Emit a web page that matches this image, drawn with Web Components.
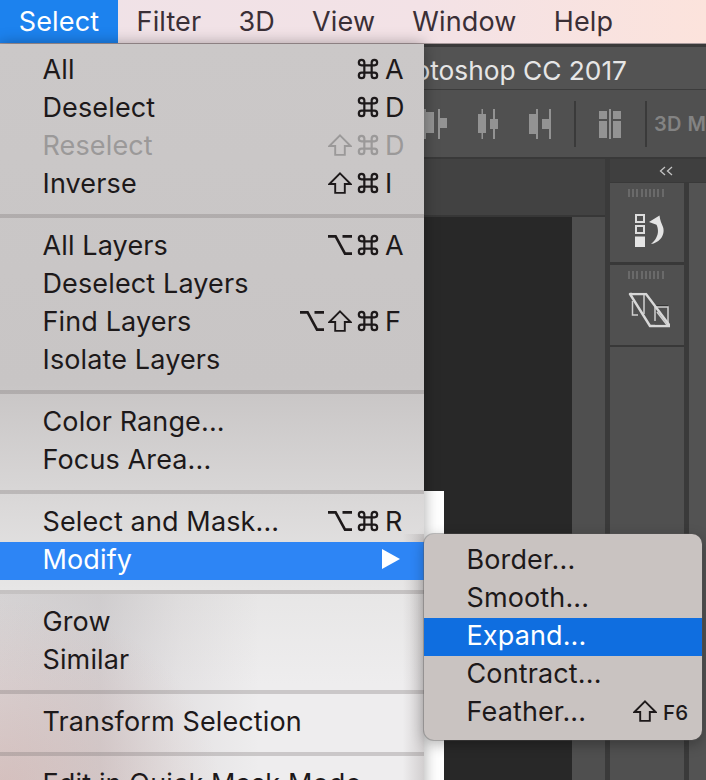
<!DOCTYPE html>
<html lang="en"><head><meta charset="utf-8"><title>Select menu</title>
<style>
html,body{margin:0;padding:0;background:#4a4a4a}
body{font-family:Inter,"Liberation Sans",sans-serif;font-size:27px;letter-spacing:.13px;width:706px;height:780px;overflow:hidden}
</style></head><body>
<app-stage>
  <mac-menubar>
    <bar-item active>Select</bar-item><bar-item>Filter</bar-item><bar-item>3D</bar-item><bar-item>View</bar-item><bar-item>Window</bar-item><bar-item>Help</bar-item>
  </mac-menubar>
  <ps-window>otoshop CC 2017</ps-window>
  <select-menu slot="over">
    <menu-row keys="cmd" letter="A">All</menu-row>
    <menu-row keys="cmd" letter="D">Deselect</menu-row>
    <menu-row keys="shift cmd" letter="D" disabled>Reselect</menu-row>
    <menu-row keys="shift cmd" letter="I">Inverse</menu-row>
    <menu-sep></menu-sep>
    <menu-row keys="opt cmd" letter="A">All Layers</menu-row>
    <menu-row>Deselect Layers</menu-row>
    <menu-row keys="opt shift cmd" letter="F">Find Layers</menu-row>
    <menu-row>Isolate Layers</menu-row>
    <menu-sep></menu-sep>
    <menu-row>Color Range...</menu-row>
    <menu-row>Focus Area...</menu-row>
    <menu-sep></menu-sep>
    <menu-row keys="opt cmd" letter="R">Select and Mask...</menu-row>
    <menu-row selected arrow>Modify</menu-row>
    <menu-sep></menu-sep>
    <menu-row>Grow</menu-row>
    <menu-row>Similar</menu-row>
    <menu-sep></menu-sep>
    <menu-row>Transform Selection</menu-row>
    <menu-sep></menu-sep>
    <menu-row>Edit in Quick Mask Mode</menu-row>
  </select-menu>
  <sub-menu slot="over">
    <menu-row>Border...</menu-row>
    <menu-row>Smooth...</menu-row>
    <menu-row current>Expand...</menu-row>
    <menu-row>Contract...</menu-row>
    <menu-row keys="shift" small="F6">Feather...</menu-row>
  </sub-menu>
</app-stage>
<script>
const GLYPH={
 cmd:'<svg width="24" height="22" viewBox="0 0 24 24" fill="none" stroke="currentColor" stroke-width="2.4"><path d="M8 8V5A3 3 0 1 0 5 8H19A3 3 0 1 0 16 5V19A3 3 0 1 0 19 16H5A3 3 0 1 0 8 19Z"/></svg>',
 shift:'<svg width="24" height="22" viewBox="0 0 24 22" fill="none" stroke="currentColor" stroke-width="1.9"><path d="M12 1.400 22.600 12H16.800V20.900H7.200V12H1.400Z"/></svg>',
 opt:'<svg width="24" height="22" viewBox="0 0 24 22" fill="none" stroke="currentColor" stroke-width="2.6"><path d="M0 2.400H7.600L17 19.600H24M14.500 2.400H24"/></svg>'
};
function def(name,css,html){
  customElements.define(name,class extends HTMLElement{
    constructor(){super();this.attachShadow({mode:'open'});}
    connectedCallback(){
      const body=typeof html==='function'?html(this):html;
      this.shadowRoot.innerHTML='<style>'+css+'</style>'+body;
    }
  });
}
const I='#939393';
def('app-stage',`:host{display:block;position:relative;width:706px;height:780px;overflow:hidden}
  .base{display:flex;flex-direction:column;height:100%}`,
  `<div class="base"><slot></slot></div><slot name="over"></slot>`);
def('mac-menubar',`:host{display:flex;flex:none;height:43px;border-bottom:1px solid #a89a9c;background:linear-gradient(90deg,#efe2e7,#f3e2e6 60%,#fce3dc);color:#3a2f36}`,`<slot></slot>`);
def('bar-item',`:host{display:flex;align-items:center;height:43px;padding:0 18.6px 1px;box-sizing:border-box}
  :host([active]){background:#1c82ee;color:#fff;width:118px;padding:0 0 1px;justify-content:center}`,`<slot></slot>`);
def('ps-window',`:host{display:flex;flex-direction:column;flex:1;min-height:0;background:#3a3a3a}
  .title{flex:none;height:43px;box-sizing:border-box;padding:4px 79px 0 0;margin-top:3px;background:#535353;color:#e6e6e6;font-size:26.3px;letter-spacing:0;display:flex;justify-content:flex-end;align-items:center;white-space:nowrap;border-bottom:1px solid #3c3c3c}
  .opts{flex:none;height:69px;box-sizing:border-box;background:#505050;display:flex;justify-content:flex-end;align-items:center;border-bottom:2px solid #393939}
  .opts svg{flex:none;display:block}
  .g{flex:none}
  .vsep{flex:none;width:2px;height:46px;background:#3a3a3a}
  .d3{flex:none;width:52px;margin-left:7px;padding-top:1px;color:#838383;font-size:20px;font-weight:600;white-space:nowrap;letter-spacing:.4px}
  .work{flex:1;display:flex;min-height:0;justify-content:flex-end}
  .docs{flex:none;width:605px;display:flex;flex-direction:column;background:#4f4f4f}
  .tabs{flex:none;height:58px;box-sizing:border-box;background:#424242;border-bottom:2px solid #373737}
  .row{flex:1;display:flex;justify-content:flex-end;min-height:0}
  .canvas{flex:none;width:148px;background:#282828;box-sizing:border-box;padding-top:274px;display:flex;flex-direction:column}
  .sheet{flex:1;width:20px;background:#fff}
  .gut{flex:none;width:33px}
  .dock{flex:1;display:flex;flex-direction:column;margin-left:5px;min-width:0}
  .head{flex:none;height:24px;background:#3f3f3f;border-bottom:1px solid #393939;box-sizing:border-box;display:flex;align-items:center;padding-left:49px}
  .cols{flex:1;display:flex;min-height:0}
  .col1{flex:none;width:74px;display:flex;flex-direction:column;gap:3px;background:#383838}
  .panel{flex:none;height:79px;background:#505050;display:flex;flex-direction:column;align-items:center}
  .panel.two{height:80px}
  .panel.rest{flex:1;margin-top:-1px}
  .grip{flex:none;width:38px;height:8px;margin:6px 0 17px;background:repeating-linear-gradient(90deg,#6a6a6a 0 2px,transparent 2px 4.2px)}
  .two .grip{margin-bottom:13px}
  .hist{margin-left:5px}
  .col2{flex:1;margin-left:5px;background:#535353}
  `,
  el=>`<div class="title">${el.textContent}</div>
  <div class="opts">
    <svg width="23" height="30" viewBox="0 0 23 30" fill="${I}"><path d="M0 0H2V30H0ZM2 3H10V24H2ZM14 0H16V30H14ZM16 9H23V19H16Z"/></svg>
    <span class="g" style="width:31px"></span>
    <svg width="20" height="30" viewBox="0 0 20 30" fill="${I}"><path d="M3.500 0H5V5H8V24H5V30H3.500V24H0V5H3.500ZM15 0H17V10H20V20H17V30H15V20H12V10H15Z"/></svg>
    <span class="g" style="width:31px"></span>
    <svg width="22" height="30" viewBox="0 0 22 30" fill="${I}"><path d="M0 5H7V25H0ZM7 0H9V30H7ZM13 10H20V20H13ZM20 0H22V30H20Z"/></svg>
    <span class="g" style="width:23px"></span><span class="vsep"></span><span class="g" style="width:23px"></span>
    <svg width="22" height="30" viewBox="0 0 22 30" fill="${I}"><path d="M0 2H8V10H0ZM0 12H8V29H0ZM10 0H12V30H10ZM14 2H22V10H14ZM14 12H22V29H14Z"/></svg>
    <span class="g" style="width:24px"></span><span class="vsep"></span>
    <span class="d3">3D M</span>
  </div>
  <div class="work">
    <div class="docs"><div class="tabs"></div>
      <div class="row"><div class="canvas"><div class="sheet"></div></div><div class="gut"></div></div>
    </div>
    <div class="dock">
      <div class="head"><svg width="14" height="10" viewBox="0 0 14 10" fill="none" stroke="#c4c4c4" stroke-width="1.300"><path d="M6 1 1.500 5 6 9M13 1 8.500 5 13 9"/></svg></div>
      <div class="cols"><div class="col1">
        <div class="panel"><div class="grip"></div>
          <svg class="hist" width="30" height="33" viewBox="0 0 30 33"><g fill="none" stroke="#dcdcdc" stroke-width="2"><rect x="1" y="1" width="8" height="7"/><rect x="1" y="12" width="8" height="7"/></g><rect x="0" y="22.500" width="10" height="10.500" fill="#e4e4e4"/><path d="M24.500 1.500 14 8 21.500 10.800C24.500 17 23 24.500 16 30 25 28.500 30.500 20.500 28 13 26.500 9.500 25 6 24.500 1.500Z" fill="#e4e4e4"/></svg>
        </div>
        <div class="panel two"><div class="grip"></div>
          <svg width="46" height="36" viewBox="-1 8 46 36" fill="none"><path d="M7 8.500H21M30 22H43M30 41H43" stroke="#2c2c2c" stroke-width="1.500"/><path d="M7.500 17V31H13M19 10V30M30 23H43V41M30 23V37M32 28 42 41" stroke="#cfcfcf" stroke-width="1.500"/><path d="M5 10H21L45 42H25Z" stroke="#d8d8d8" stroke-width="2.400" stroke-linejoin="round"/></svg>
        </div>
        <div class="panel rest"></div>
      </div><div class="col2"></div></div>
    </div>
  </div>`);
def('select-menu',`:host{display:block;position:absolute;left:0;top:44px;width:424px;box-sizing:border-box;padding-top:8px;height:800px;color:#1d191a;
   box-shadow:0 0 14px rgba(0,0,0,.35);
   background:
    linear-gradient(90deg,transparent 95%,rgba(110,100,100,.22)) 0 490px/100% 290px no-repeat,
    radial-gradient(ellipse 220px 190px at 0 745px,rgba(200,140,130,.32),rgba(200,140,130,0) 100%) 0 0/100% 100% no-repeat,
    linear-gradient(90deg,rgba(140,130,135,.2) 0,rgba(130,122,128,.24) 100px,rgba(140,130,135,.1) 180px,transparent 260px) 0 550px/100% 290px no-repeat,
    linear-gradient(180deg,#cbc8c8 0,#c8c5c5 340px,#d8d6d6 445px,#e7e6e6 545px,#eeedee 640px,#eeedee 100%)}`,`<slot></slot>`);
def('sub-menu',`:host{display:block;position:absolute;left:424px;top:534px;width:278px;box-sizing:border-box;padding:8px 0;height:206px;color:#1d191a;background:#c9c3c1;border-radius:10px;box-shadow:0 0 0 1px rgba(90,85,85,.35),0 4px 14px rgba(0,0,0,.3)}`,`<slot></slot>`);
def('menu-sep',`:host{display:block;height:4px;margin:10px 0;background:rgba(120,112,112,.3)}`,``);
def('menu-row',`:host{display:flex;align-items:center;height:38px;box-sizing:border-box;padding:0 0 4px 42.500px;white-space:nowrap}
  :host([disabled]){color:#9b9999}
  :host([selected]){background:#2d85f5;color:#fff}
  :host([current]){background:#0f6ee0;color:#fff}
  .keys{margin-left:auto;display:flex;align-items:center}
  .k{display:block;width:24px;height:22px;margin-right:4px}
  .k svg{display:block}
  .l{width:39px;margin-left:1px}
  .s{font-size:20.500px;font-weight:500;width:39px;margin-left:2px;padding-top:2px}
  .arrow{margin-left:auto;margin-right:24px;display:block}`,
  el=>{
    const keys=(el.getAttribute('keys')||'').split(' ').filter(Boolean);
    const L=el.getAttribute('letter'),S=el.getAttribute('small');
    let tail='';
    if(keys.length) tail='<span class="keys">'+keys.map(k=>'<span class="k">'+GLYPH[k]+'</span>').join('')+(L?'<span class="l">'+L+'</span>':'')+(S?'<span class="s">'+S+'</span>':'')+'</span>';
    if(el.hasAttribute('arrow')) tail='<svg class="arrow" width="18" height="20" viewBox="0 0 18 20" fill="#fff"><path d="M0 0 18 10 0 20Z"/></svg>';
    return '<slot></slot>'+tail;
  });
</script>
</body></html>
